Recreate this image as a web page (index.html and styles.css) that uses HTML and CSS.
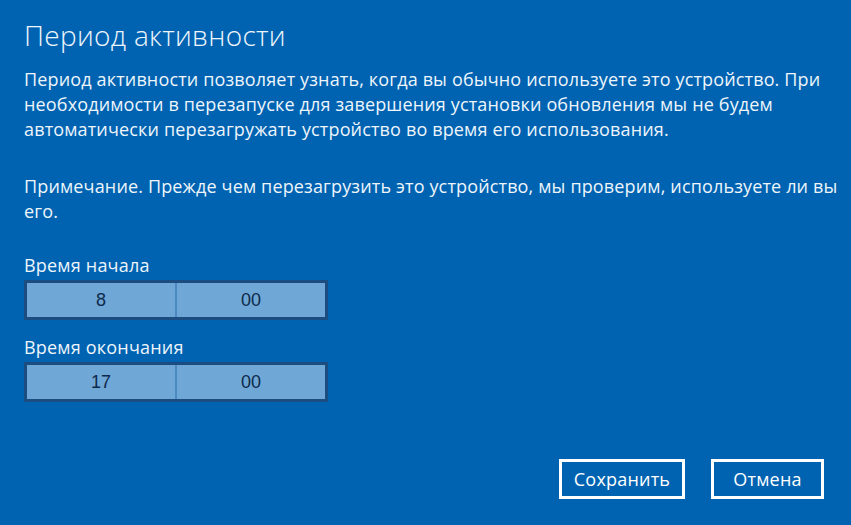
FILE: index.html
```html
<!DOCTYPE html>
<html lang="ru">
<head>
<meta charset="utf-8">
<link rel="stylesheet" href="styles.css">
</head>
<body>
<div class="page">
  <h1 class="title">Период активности</h1>
  <p class="text">Период активности позволяет узнать, когда вы обычно используете это устройство. При необходимости в перезапуске для завершения установки обновления мы не будем автоматически перезагружать устройство во время его использования.</p>
  <p class="text note">Примечание. Прежде чем перезагрузить это устройство, мы проверим, используете ли вы его.</p>
  <div class="field">
    <div class="label">Время начала</div>
    <div class="picker"><span class="cell">8</span><span class="cell">00</span></div>
  </div>
  <div class="field">
    <div class="label">Время окончания</div>
    <div class="picker"><span class="cell">17</span><span class="cell">00</span></div>
  </div>
  <div class="actions">
    <button class="btn btn-save">Сохранить</button>
    <button class="btn btn-cancel">Отмена</button>
  </div>
</div>
</body>
</html>
```
FILE: styles.css
```css
html, body {
  margin: 0;
  height: 100%;
  background: #0063b1;
}
body {
  font-family: "Open Sans", "Noto Sans", sans-serif;
  color: #eef5fb;
  overflow: hidden;
}
.page {
  box-sizing: border-box;
  padding: 17px 27px 26px 24px;
  width: 851px;
  height: 525px;
  display: flex;
  flex-direction: column;
}
.title {
  margin: 0;
  font-weight: 300;
  font-size: 28px;
  line-height: 36px;
  letter-spacing: 0.3px;
}
.text {
  margin: 14px -15px 0 0;
  font-size: 18px;
  letter-spacing: 0.15px;
  line-height: 25px;
}
.note {
  margin-top: 32px;
}
.field {
  display: flex;
  flex-direction: column;
}
.label {
  font-size: 18px;
  letter-spacing: 0.2px;
  line-height: 22px;
  margin-top: 30px;
  margin-bottom: 4px;
}
.field + .field .label { margin-top: 16px; }
.picker {
  display: flex;
  width: 298px;
  height: 34px;
  border: 3px solid #1c4d80;
  background: #6fa7d6;
}
.cell {
  flex: 1;
  display: flex;
  align-items: center;
  justify-content: center;
  font-family: "Liberation Sans", Arial, sans-serif;
  font-size: 18px;
  color: #0e2a4b;
}
.cell + .cell {
  border-left: 2px solid #4b89c0;
}
.actions {
  display: flex;
  justify-content: flex-end;
  gap: 26px;
  margin-top: auto;
}
.btn {
  height: 40px;
  border: 3px solid #ffffff;
  background: transparent;
  color: #ffffff;
  font-family: "Open Sans", "Noto Sans", sans-serif;
  font-size: 18px;
  letter-spacing: 0.2px;
  padding: 0;
}
.btn-save { width: 126px; }
.btn-cancel { width: 113px; }
```
